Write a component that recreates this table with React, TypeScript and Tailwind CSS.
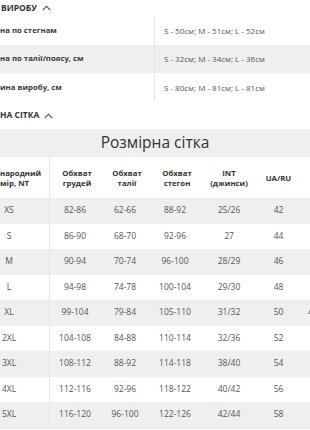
import React from 'react';

const specs = [
  { label: 'на по стегнам', value: 'S - 50см; M - 51см; L - 52см', h: 'h-[29px]', bg: 'bg-white' },
  { label: 'на по талії/поясу, см', value: 'S - 32см; M - 34см; L - 36см', h: 'h-[28px]', bg: 'bg-[#efefef]' },
  { label: 'ина виробу, см', value: 'S - 80см; M - 81см; L - 81см', h: 'h-[29px]', bg: 'bg-white' },
];

const sizes = [
  ['XS', '82-86', '62-66', '88-92', '25/26', '42', ''],
  ['S', '86-90', '68-70', '92-96', '27', '44', ''],
  ['M', '90-94', '70-74', '96-100', '28/29', '46', ''],
  ['L', '94-98', '74-78', '100-104', '29/30', '48', ''],
  ['XL', '99-104', '79-84', '105-110', '31/32', '50', '40'],
  ['2XL', '104-108', '84-88', '110-114', '32/36', '52', ''],
  ['3XL', '108-112', '88-92', '114-118', '38/40', '54', ''],
  ['4XL', '112-116', '92-96', '118-122', '40/42', '56', ''],
  ['5XL', '116-120', '96-100', '122-126', '42/44', '58', ''],
];

const cols = 'grid grid-cols-[50px_50px_50px_50px_58px_41px_1fr]';

const Chevron = () => (
  <svg width="9" height="6" viewBox="0 0 9 6" fill="none" className="ml-[5px]">
    <polyline points="0.8,5.2 4.5,1.2 8.2,5.2" stroke="#444" strokeWidth="1.1" />
  </svg>
);

const App = () => {
  return (
    <div className="w-[310px] h-[430px] overflow-hidden bg-white text-[#333] font-['Open_Sans',sans-serif]">
      {/* Product section */}
      <div className="h-[16px] flex items-center text-[8.5px] font-bold uppercase pl-[1px]">
        <span>виробу</span>
        <Chevron />
      </div>
      <div>
        {specs.map((s) => (
          <div key={s.label} className={`grid grid-cols-[154px_1fr] ${s.h} ${s.bg}`}>
            <div className="flex items-center text-[7.8px] font-bold text-[#3a3a3a] whitespace-nowrap overflow-hidden">
              {s.label}
            </div>
            <div className="flex items-center pl-[9px] border-l border-[#e6e4f3] text-[8px] text-[#555] whitespace-nowrap">
              {s.value}
            </div>
          </div>
        ))}
      </div>

      {/* Size chart section */}
      <div className="h-[27px] flex items-center text-[8.5px] font-bold uppercase">
        <span>на сітка</span>
        <Chevron />
      </div>
      <div className="h-[28px] bg-[#efefef] flex items-center justify-center text-[15.5px] text-[#333]">
        Розмірна сітка
      </div>
      <div className={`${cols} h-[41px] text-[7.8px] font-bold leading-[10px] text-[#333]`}>
        <div className="flex flex-col justify-center whitespace-nowrap overflow-hidden border-r border-[#e6e4f3]">
          <span>народний</span>
          <span>мір, NT</span>
        </div>
        <div className="flex flex-col justify-center items-center pl-[4px]">
          <span>Обхват</span>
          <span>грудей</span>
        </div>
        <div className="flex flex-col justify-center items-center pl-[4px]">
          <span>Обхват</span>
          <span>талії</span>
        </div>
        <div className="flex flex-col justify-center items-center pl-[4px]">
          <span>Обхват</span>
          <span>стегон</span>
        </div>
        <div className="flex flex-col justify-center items-center">
          <span>INT</span>
          <span>(джинси)</span>
        </div>
        <div className="flex flex-col justify-center items-center">
          <span>UA/RU</span>
        </div>
        <div />
      </div>
      <div className="border-b border-[#eeeeee]">
        {sizes.map((r, i) => (
          <div
            key={r[0]}
            className={`${cols} h-[25.5px] text-[8.5px] text-[#555] ${i % 2 === 0 ? 'bg-[#efefef]' : 'bg-white'}`}
          >
            <div className="flex items-center justify-center pr-[31px] border-r border-[#e6e4f3]">{r[0]}</div>
            <div className="flex items-center justify-center">{r[1]}</div>
            <div className="flex items-center justify-center">{r[2]}</div>
            <div className="flex items-center justify-center">{r[3]}</div>
            <div className="flex items-center justify-center">{r[4]}</div>
            <div className="flex items-center justify-center">{r[5]}</div>
            <div className="flex items-center pl-[9px] whitespace-nowrap overflow-hidden">{r[6]}</div>
          </div>
        ))}
      </div>
    </div>
  );
};

export default App;
